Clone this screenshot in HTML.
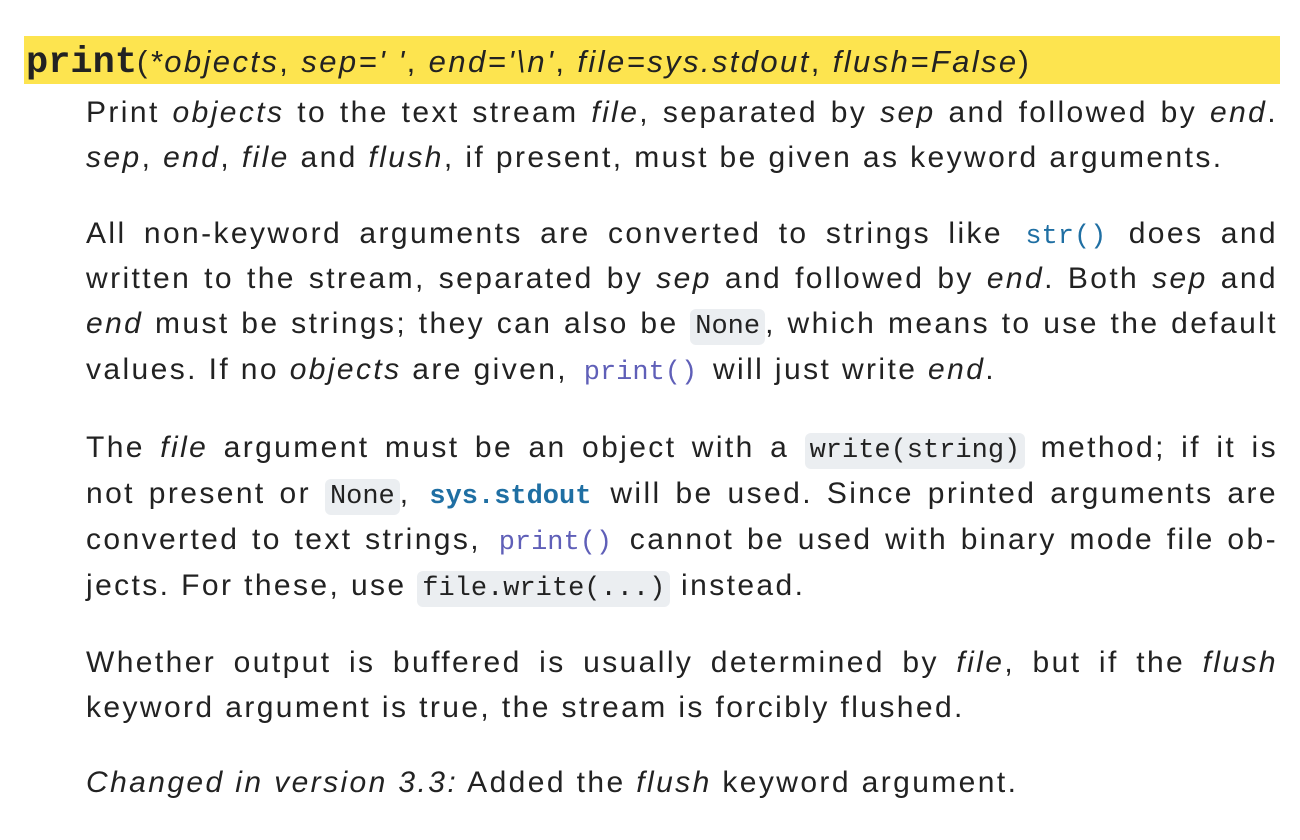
<!DOCTYPE html>
<html><head><meta charset="utf-8"><style>
html,body{margin:0;padding:0;background:#fff;width:1300px;height:840px;overflow:hidden}
body{position:relative;font-family:"Liberation Sans","DejaVu Sans",sans-serif;color:#222}
.band{position:absolute;left:24px;top:36px;width:1256px;height:48px;background:#fde44f}
.sig{position:absolute;left:26px;top:36px;height:48px;line-height:52px;font-size:31px;white-space:nowrap;letter-spacing:2.4px}
.sig b{font-family:"Liberation Mono",monospace;font-weight:bold;font-size:37px;letter-spacing:0}
.sig i{font-style:italic}
.l{position:absolute;left:86px;width:1192px;height:45px;line-height:45px;font-size:30px;letter-spacing:2.4px;white-space:nowrap}
.j{text-align:justify;text-align-last:justify;white-space:normal}
code{font-family:"Liberation Mono",monospace;font-size:27px;letter-spacing:0;background:#ebeef1;border-radius:6px;padding:3px 5px}
code.b{background:none;color:#1f6fa3;font-weight:bold}
code.p{background:none;color:#5f5fb8}
</style></head><body>
<div class="band"></div>
<div class="sig"><b>print</b>(<i>*objects</i>, <i>sep=' '</i>, <i>end='\n'</i>, <i>file=sys.stdout</i>, <i>flush=False</i>)</div>

<div class="l j" style="top:90px">Print <i>objects</i> to the text stream <i>file</i>, separated by <i>sep</i> and followed by <i>end</i>.</div>
<div class="l" style="top:135px"><i>sep</i>, <i>end</i>, <i>file</i> and <i>flush</i>, if present, must be given as keyword arguments.</div>

<div class="l j" style="top:211px">All non-keyword arguments are converted to strings like <code class="b" style="font-weight:normal">str()</code> does and</div>
<div class="l j" style="top:256px">written to the stream, separated by <i>sep</i> and followed by <i>end</i>. Both <i>sep</i> and</div>
<div class="l j" style="top:301px"><i>end</i> must be strings; they can also be <code>None</code>, which means to use the default</div>
<div class="l" style="top:347px">values. If no <i>objects</i> are given, <code class="p">print()</code> will just write <i>end</i>.</div>

<div class="l j" style="top:425px">The <i>file</i> argument must be an object with a <code>write(string)</code> method; if it is</div>
<div class="l j" style="top:471px">not present or <code>None</code>, <code class="b">sys.stdout</code> will be used. Since printed arguments are</div>
<div class="l j" style="top:517px">converted to text strings, <code class="p">print()</code> cannot be used with binary mode file ob-</div>
<div class="l" style="top:563px">jects. For these, use <code>file.write(...)</code> instead.</div>

<div class="l j" style="top:640px">Whether output is buffered is usually determined by <i>file</i>, but if the <i>flush</i></div>
<div class="l" style="top:685px">keyword argument is true, the stream is forcibly flushed.</div>

<div class="l" style="top:760px"><i>Changed in version 3.3:</i> Added the <i>flush</i> keyword argument.</div>
</body></html>
